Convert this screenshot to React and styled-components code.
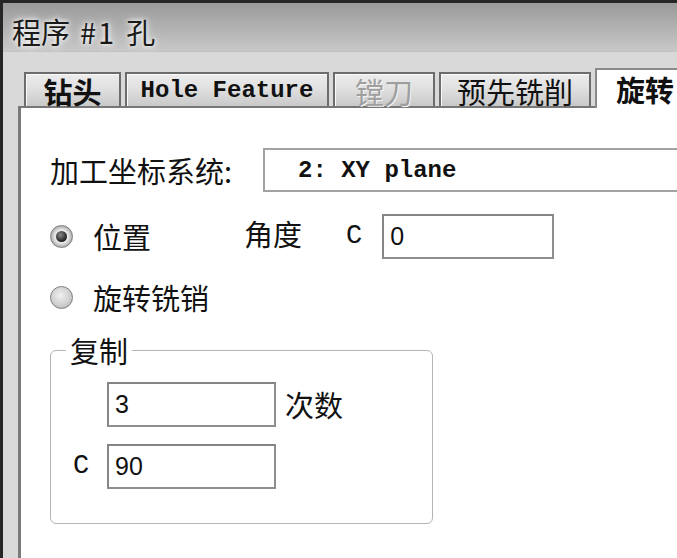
import React from "react";
import styled, { createGlobalStyle } from "styled-components";

const CJK = `"Noto Sans CJK SC", "Noto Sans", sans-serif`;
const MONO = `"Liberation Mono", "DejaVu Sans Mono", monospace`;
const SANS = `"Liberation Sans", Arial, sans-serif`;

const GlobalStyle = createGlobalStyle`
  html, body {
    margin: 0;
    padding: 0;
    background: #fff;
  }
  body {
    font-family: ${CJK};
    color: #111;
  }
`;

const TABS = [
  { label: "钻头", width: 97, bold: true },
  { label: "Hole Feature", width: 204, mono: true },
  { label: "镗刀", width: 102, disabled: true },
  { label: "预先铣削", width: 152 },
  { label: "旋转", width: 100, bold: true, active: true },
];

const App = () => {
  return (
    <>
      <GlobalStyle />
      <Window>
        <TitleBar>
          程序 <Latin>#1</Latin> 孔
        </TitleBar>
        <Body>
          <TabRow>
            {TABS.map((t) => (
              <Tab
                key={t.label}
                $width={t.width}
                $bold={t.bold}
                $mono={t.mono}
                $disabled={t.disabled}
                $active={t.active}
              >
                {t.label}
              </Tab>
            ))}
          </TabRow>
          <Panel>
            <Row $height={44}>
              <Label $width={213}>加工坐标系统:</Label>
              <Select>2: XY plane</Select>
            </Row>
            <Row $height={44} $top={22}>
              <Radio $checked />
              <Label $left={20}>位置</Label>
              <Label $left={93} $raise>角度</Label>
              <Axis $left={44}>C</Axis>
              <Input $left={20} $width={172}>0</Input>
            </Row>
            <Row $height={30} $top={24}>
              <Radio />
              <Label $left={20}>旋转铣销</Label>
            </Row>
            <Group>
              <Legend>复制</Legend>
              <GroupGrid>
                <span />
                <Input $width={169}>3</Input>
                <Label>次数</Label>
                <Axis>C</Axis>
                <Input $width={169}>90</Input>
                <span />
              </GroupGrid>
            </Group>
          </Panel>
        </Body>
      </Window>
    </>
  );
};

const Window = styled.div`
  width: 677px;
  height: 558px;
  box-sizing: border-box;
  border-left: 3px solid #262626;
  border-top: 3px solid #262626;
  background: #d9d9d9;
  display: flex;
  flex-direction: column;
  overflow: hidden;
`;
const TitleBar = styled.div`
  height: 49px;
  box-sizing: border-box;
  flex-shrink: 0;
  display: flex;
  align-items: center;
  gap: 10px;
  padding: 8px 0 0 9px;
  font-size: 29px;
  color: #1a1a1a;
  white-space: nowrap;
  background: linear-gradient(#9a9a9a, #c8c8c8);
  border-bottom: 1px solid #c2c2c2;
  text-shadow: 0 0 4px #fff, 0 0 8px #fff;
`;
const Latin = styled.span`
  letter-spacing: 2px;
`;
const Body = styled.div`
  flex: 1;
  display: flex;
  flex-direction: column;
  padding: 16px 0 0 15px;
  min-height: 0;
`;
const TabRow = styled.div`
  position: relative;
  z-index: 1;
  height: 40px;
  display: flex;
  align-items: flex-end;
  gap: 4px;
  padding-left: 6px;
  flex-shrink: 0;
`;
const Tab = styled.div`
  flex-shrink: 0;
  box-sizing: border-box;
  width: ${(p) => p.$width}px;
  height: ${(p) => (p.$active ? 40 : 34)}px;
  margin-bottom: ${(p) => (p.$active ? 0 : 2)}px;
  display: flex;
  align-items: center;
  justify-content: center;
  border: 2px solid ${(p) => (p.$active ? "#8a8a8a" : "#6c6c6c")};
  border-bottom: none;
  background: ${(p) =>
    p.$active ? "#fff" : "linear-gradient(#ececec, #e0e0e0 45%, #c9c9c9)"};
  box-shadow: ${(p) => (p.$active ? "none" : "inset 1px 1px 0 #fafafa")};
  font-family: ${(p) => (p.$mono ? MONO : CJK)};
  font-size: ${(p) => (p.$mono ? 24 : 29)}px;
  font-weight: ${(p) => (p.$bold || p.$mono ? 700 : 400)};
  color: ${(p) => (p.$disabled ? "#9f9f9f" : "#111")};
  text-shadow: ${(p) => (p.$disabled ? "1px 1px 0 #f4f4f4" : "none")};
  white-space: nowrap;
  line-height: 1;
  padding-top: ${(p) => (p.$active ? 0 : 2)}px;
`;
const Panel = styled.div`
  flex: 1;
  margin-top: -2px;
  background: #fff;
  border-left: 3px solid #7a7a7a;
  border-top: 2px solid #777;
  padding: 40px 0 0 29px;
  display: flex;
  flex-direction: column;
  align-items: flex-start;
  overflow: hidden;
`;
const Row = styled.div`
  display: flex;
  align-items: center;
  height: ${(p) => p.$height}px;
  margin-top: ${(p) => p.$top || 0}px;
  white-space: nowrap;
`;
const Label = styled.span`
  font-size: 29px;
  line-height: 1;
  color: #111;
  flex-shrink: 0;
  width: ${(p) => (p.$width ? `${p.$width}px` : "auto")};
  margin-left: ${(p) => p.$left || 0}px;
  position: relative;
  top: ${(p) => (p.$raise ? -3 : 0)}px;
`;
const Select = styled.div`
  box-sizing: border-box;
  width: 440px;
  height: 44px;
  flex-shrink: 0;
  border: 2px solid #a2a2a2;
  display: flex;
  align-items: center;
  padding-left: 33px;
  font-family: ${MONO};
  font-weight: 700;
  font-size: 24px;
  color: #111;
`;
const Radio = styled.span`
  position: relative;
  width: 23px;
  height: 23px;
  box-sizing: border-box;
  flex-shrink: 0;
  border-radius: 50%;
  border: 1px solid #7e7e7e;
  background: ${(p) =>
    p.$checked
      ? "radial-gradient(circle at 50% 50%, #e8e8e8 45%, #9a9a9a 80%)"
      : "radial-gradient(circle at 45% 40%, #f0f0f0, #cdcdcd 60%, #aaaaaa)"};
  &::after {
    content: "";
    display: ${(p) => (p.$checked ? "block" : "none")};
    position: absolute;
    left: 5px;
    top: 5px;
    width: 11px;
    height: 11px;
    border-radius: 50%;
    background: radial-gradient(circle at 40% 35%, #8a8a8a, #202020 70%);
  }
`;
const Axis = styled.span`
  font-family: ${MONO};
  font-size: 27px;
  line-height: 1;
  color: #111;
  margin-left: ${(p) => p.$left || 0}px;
`;
const Input = styled.div`
  box-sizing: border-box;
  width: ${(p) => p.$width}px;
  height: 45px;
  flex-shrink: 0;
  margin-left: ${(p) => p.$left || 0}px;
  border: 2px solid #8e8e8e;
  border-top-color: #858585;
  border-left-color: #858585;
  background: #fff;
  display: flex;
  align-items: center;
  padding-left: 6px;
  font-family: ${SANS};
  font-size: 25px;
  color: #111;
`;
const Group = styled.fieldset`
  margin: 20px 0 0 0;
  width: 383px;
  height: 192px;
  box-sizing: border-box;
  border: 1px solid #b4b4b4;
  border-radius: 6px;
  padding: 0 0 0 22px;
`;
const Legend = styled.legend`
  margin-left: -7px;
  padding: 0 4px;
  font-size: 29px;
  line-height: 36px;
  color: #111;
`;
const GroupGrid = styled.div`
  display: grid;
  grid-template-columns: 25px 169px auto;
  column-gap: 9px;
  row-gap: 17px;
  align-items: center;
  margin-top: 14px;
`;

export default App;
